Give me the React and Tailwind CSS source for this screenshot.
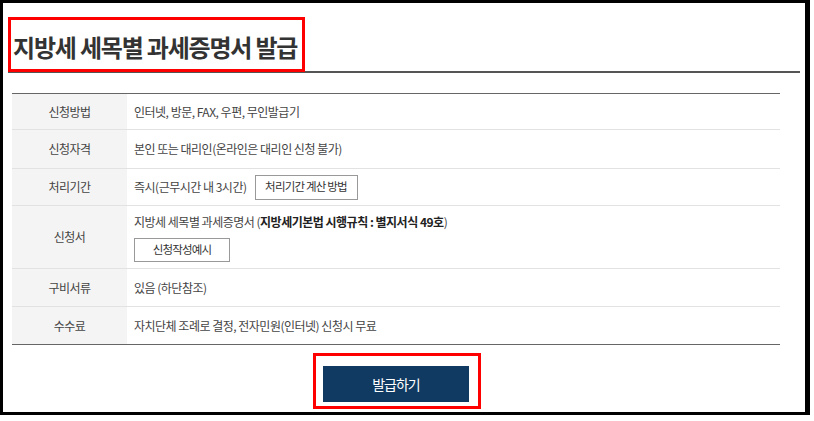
import React from "react";

const rows = [
  { label: "신청방법", h: "h-[35px]", content: "인터넷, 방문, FAX, 우편, 무인발급기" },
  { label: "신청자격", h: "h-[38px]", content: "본인 또는 대리인(온라인은 대리인 신청 불가)" },
  { label: "처리기간", h: "h-[36px]", content: "period" },
  { label: "신청서", h: "h-[62px]", content: "form" },
  { label: "구비서류", h: "h-[37px]", content: "있음 (하단참조)" },
  { label: "수수료", h: "h-[37px]", content: "자치단체 조례로 결정, 전자민원(인터넷) 신청시 무료" },
];

const renderContent = (content) => {
  if (content === "period") {
    return (
      <div className="flex items-center">
        <span>즉시(근무시간 내 3시간)</span>
        <button className="ml-[8px] h-[25px] w-[103px] border border-[#999] bg-white text-[11.5px] tracking-[-0.8px] text-[#333]">
          처리기간 계산 방법
        </button>
      </div>
    );
  }
  if (content === "form") {
    return (
      <div className="flex flex-col items-start">
        <span>
          지방세 세목별 과세증명서 (<b className="font-bold text-[#222]">지방세기본법 시행규칙 : 별지서식 49호</b>)
        </span>
        <button className="mt-[7px] h-[24px] w-[96px] border border-[#999] bg-white text-[11.5px] tracking-[-0.8px] text-[#333]">
          신청작성예시
        </button>
      </div>
    );
  }
  return <span>{content}</span>;
};

const App = () => {
  return (
    <div className="w-[814px] h-[421px] bg-white font-['Noto_Sans_CJK_KR','Noto_Sans',sans-serif]">
      <div className="w-[810px] h-[415px] border-[3px] border-r-[5px] border-black flex flex-col">
        {/* title */}
        <div className="relative mx-[5px] mt-[14px] h-[56px] border-b-2 border-[#555]">
          <h1 className="pl-[5px] pt-[15px] text-[24px] font-bold tracking-[-1.2px] text-[#333] leading-[30px]">
            지방세 세목별 과세증명서 발급
          </h1>
          <div className="absolute left-0 top-0 w-[297px] h-[55px] border-[3px] border-[#ff0000]" />
        </div>

        {/* table */}
        <div className="ml-[9px] mt-[20px] w-[768px] border-t border-[#666] text-[12px] tracking-[-0.5px] text-[#444]">
          {rows.map((row, i) => (
            <div
              key={row.label}
              className={`flex border-b ${i === rows.length - 1 ? "border-[#666]" : "border-[#e2e2e2]"}`}
            >
              <div className={`w-[115px] ${row.h} bg-[#f4f4f4] flex items-center justify-center`}>
                {row.label}
              </div>
              <div className={`flex-1 ${row.h} px-[7px] flex items-center`}>
                {renderContent(row.content)}
              </div>
            </div>
          ))}
        </div>

        {/* submit */}
        <div className="ml-[9px] w-[768px] flex justify-center mt-[21px]">
          <div className="relative">
            <button className="w-[146px] h-[36px] bg-[#113a62] text-white text-[14px] tracking-[-1px]">
              발급하기
            </button>
            <div className="absolute -left-[10px] -right-[12px] -top-[13px] -bottom-[7px] border-[3px] border-[#ff0000]" />
          </div>
        </div>
      </div>
    </div>
  );
};

export default App;
